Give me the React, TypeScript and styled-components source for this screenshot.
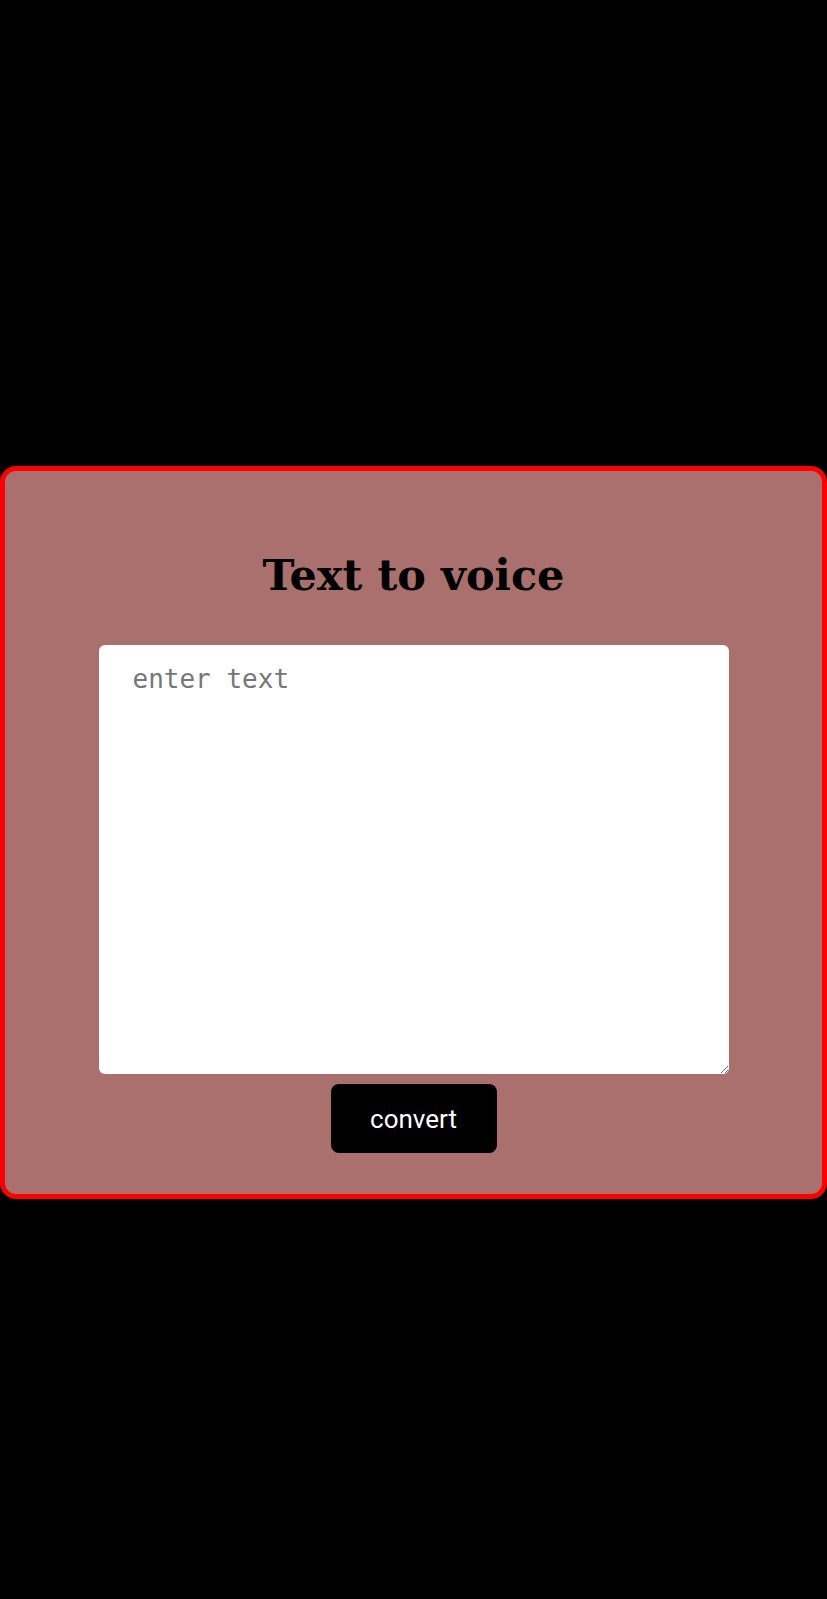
import React from "react";
import styled, { createGlobalStyle } from "styled-components";

const Global = createGlobalStyle`
  html, body { margin: 0; padding: 0; background: #000; }
  body { min-height: 100vh; }
`;

const Page = styled.main`
  min-height: 1599px;
  box-sizing: border-box;
  padding-top: 466px;
  background: #000;
`;

const Card = styled.section`
  box-sizing: border-box;
  width: 827px;
  height: 733px;
  border: 5px solid #ff0000;
  border-radius: 16px;
  background: #a9706e;
  display: flex;
  flex-direction: column;
  align-items: center;
  padding-top: 76px;
`;

const Title = styled.h1`
  margin: 0 0 42px;
  font-family: "DejaVu Serif", "Liberation Serif", serif;
  font-weight: 700;
  font-size: 43px;
  line-height: 56px;
  color: #000;
`;

const TextArea = styled.textarea`
  box-sizing: border-box;
  width: 630px;
  height: 429px;
  border: none;
  border-radius: 6px;
  background: #fff;
  padding: 19px 34px;
  font-family: "DejaVu Sans Mono", "Liberation Mono", monospace;
  font-size: 26px;
  outline: none;
  &::placeholder { color: #767676; }
`;

const Button = styled.button`
  margin-top: 10px;
  width: 166px;
  height: 69px;
  border: none;
  border-radius: 8px;
  background: #000;
  color: #fff;
  font-family: Roboto, "Liberation Sans", sans-serif;
  font-size: 26px;
  cursor: pointer;
`;

export default function App() {
  return (
    <Page>
      <Global />
      <Card>
        <Title>Text to voice</Title>
        <TextArea placeholder="enter text" />
        <Button>convert</Button>
      </Card>
    </Page>
  );
}
